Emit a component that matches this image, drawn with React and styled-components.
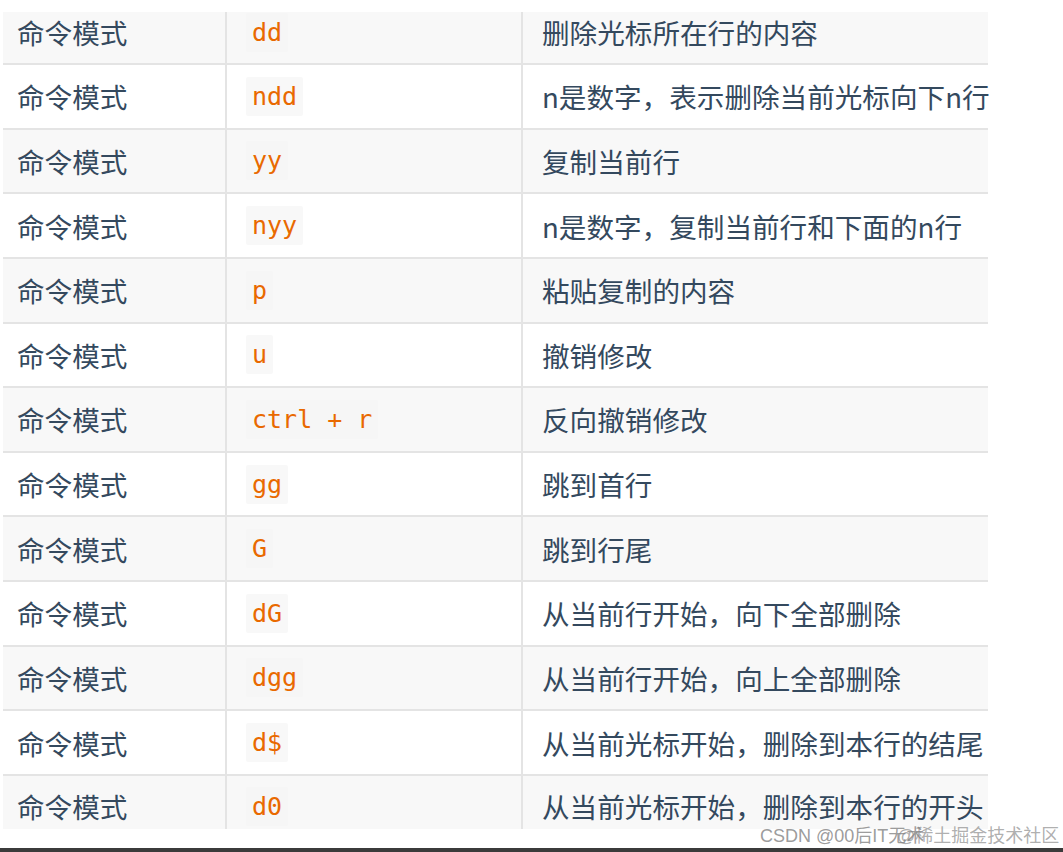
import styled, { createGlobalStyle } from "styled-components";

const GlobalStyle = createGlobalStyle`
  html, body {
    margin: 0;
    padding: 0;
    background: #fff;
  }
  body {
    font-family: "Noto Sans CJK SC", "Noto Sans", sans-serif;
  }
`;

const Page = styled.div`
  position: relative;
  width: 1063px;
  height: 852px;
  display: flex;
  flex-direction: column;
  overflow: hidden;
  background: #fff;
`;

const Table = styled.div`
  margin: 12px 0 0 3px;
  width: 985px;
  display: flex;
  flex-direction: column;
`;

const Row = styled.div`
  display: grid;
  grid-template-columns: 224px 296px 465px;
  box-sizing: border-box;
  height: ${({ $height }) => $height}px;
  border-top: ${({ $first }) => ($first ? "none" : "2px solid #e4e4e4")};
  background: ${({ $striped }) => ($striped ? "#f8f8f8" : "#fff")};
`;

// $top / $bottom nudge the text inside the clipped first and last rows
const Cell = styled.div`
  display: flex;
  align-items: center;
  box-sizing: border-box;
  padding: ${({ $top = 0 }) => $top}px 0 ${({ $bottom = 0 }) => $bottom}px ${({ $pad }) => $pad}px;
  border-right: ${({ $last }) => ($last ? "none" : "2px solid #e4e4e4")};
  color: #34495e;
  font-size: 27.6px;
  white-space: nowrap;
`;

const Code = styled.code`
  display: inline-block;
  font-family: "DejaVu Sans Mono", "Liberation Mono", monospace;
  font-size: 25px;
  line-height: 39px;
  padding: 0 6px;
  color: #e96900;
  background: ${({ $striped }) => ($striped ? "#f6f6f6" : "#f8f8f8")};
  border-radius: 2px;
`;

const Spacer = styled.div`
  flex: 1;
`;

const BottomBar = styled.div`
  height: 4px;
  background: #3b3b3b;
`;

const Watermark = styled.div`
  position: absolute;
  left: 760px;
  top: 821px;
  font-family: "Liberation Sans", "Noto Sans CJK SC", sans-serif;
  font-size: 18px;
  color: rgba(130, 130, 130, 0.8);
  white-space: nowrap;
`;

const WatermarkOver = styled(Watermark)`
  left: 897px;
  color: rgba(130, 130, 130, 0.65);
`;

const rows = [
  ["dd", "删除光标所在行的内容"],
  ["ndd", "n是数字，表示删除当前光标向下n行"],
  ["yy", "复制当前行"],
  ["nyy", "n是数字，复制当前行和下面的n行"],
  ["p", "粘贴复制的内容"],
  ["u", "撤销修改"],
  ["ctrl + r", "反向撤销修改"],
  ["gg", "跳到首行"],
  ["G", "跳到行尾"],
  ["dG", "从当前行开始，向下全部删除"],
  ["dgg", "从当前行开始，向上全部删除"],
  ["d$", "从当前光标开始，删除到本行的结尾"],
  ["d0", "从当前光标开始，删除到本行的开头"],
];

export default function App() {
  return (
    <>
      <GlobalStyle />
      <Page>
        <Table>
          {rows.map(([cmd, desc], i) => {
            const first = i === 0;
            const last = i === rows.length - 1;
            const striped = i % 2 === 0;
            const height = first ? 51 : last ? 55 : 64.64;
            const top = last ? 8 : 0;
            const bottom = first ? 12 : 0;
            return (
              <Row key={cmd} $first={first} $striped={striped} $height={height}>
                <Cell $pad={14} $top={top} $bottom={bottom}>命令模式</Cell>
                <Cell $pad={19} $top={top} $bottom={bottom}>
                  <Code $striped={striped}>{cmd}</Code>
                </Cell>
                <Cell $pad={19} $last $top={top} $bottom={bottom}>{desc}</Cell>
              </Row>
            );
          })}
        </Table>
        <Spacer />
        <BottomBar />
        <Watermark>CSDN @00后IT无术</Watermark>
        <WatermarkOver>@稀土掘金技术社区</WatermarkOver>
      </Page>
    </>
  );
}
